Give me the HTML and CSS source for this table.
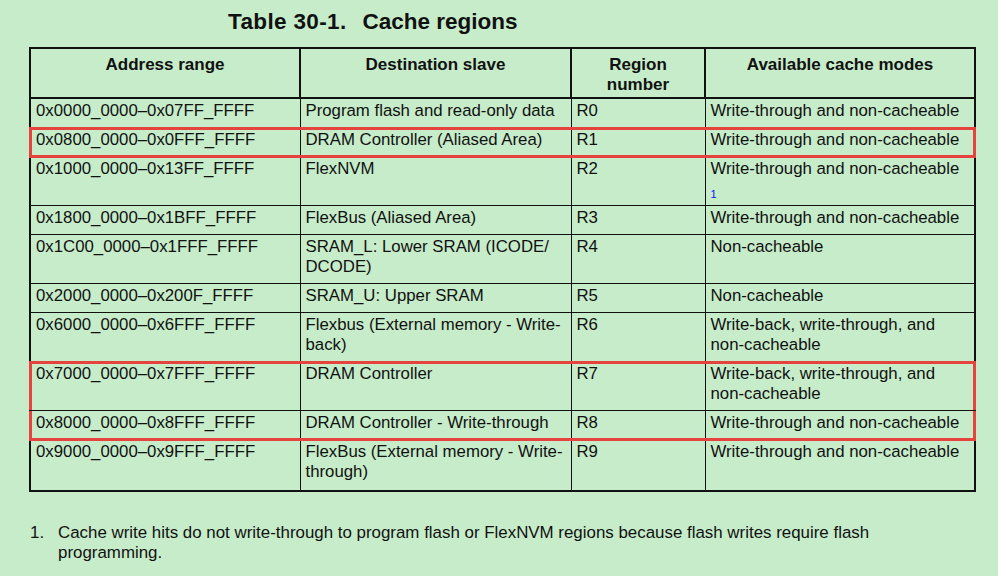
FILE: index.html
```html
<!DOCTYPE html>
<html>
<head>
<meta charset="utf-8">
<link rel="stylesheet" href="styles.css">
</head>
<body>
<div class="page">
  <h1 class="title"><span class="num">Table 30-1.</span><span>Cache regions</span></h1>
  <table class="regions">
    <colgroup>
      <col class="c1"><col class="c2"><col class="c3"><col class="c4">
    </colgroup>
    <thead>
      <tr><th>Address range</th><th>Destination slave</th><th>Region<br>number</th><th>Available cache modes</th></tr>
    </thead>
    <tbody>
      <tr><td>0x0000_0000–0x07FF_FFFF</td><td>Program flash and read-only data</td><td>R0</td><td>Write-through and non-cacheable</td></tr>
      <tr class="hl hl-top hl-bottom"><td>0x0800_0000–0x0FFF_FFFF</td><td>DRAM Controller (Aliased Area)</td><td>R1</td><td>Write-through and non-cacheable</td></tr>
      <tr><td>0x1000_0000–0x13FF_FFFF</td><td>FlexNVM</td><td>R2</td><td>Write-through and non-cacheable<br><a class="fn">1</a></td></tr>
      <tr><td>0x1800_0000–0x1BFF_FFFF</td><td>FlexBus (Aliased Area)</td><td>R3</td><td>Write-through and non-cacheable</td></tr>
      <tr><td>0x1C00_0000–0x1FFF_FFFF</td><td>SRAM_L: Lower SRAM (ICODE/<br>DCODE)</td><td>R4</td><td>Non-cacheable</td></tr>
      <tr><td>0x2000_0000–0x200F_FFFF</td><td>SRAM_U: Upper SRAM</td><td>R5</td><td>Non-cacheable</td></tr>
      <tr><td>0x6000_0000–0x6FFF_FFFF</td><td>Flexbus (External memory - Write-<br>back)</td><td>R6</td><td>Write-back, write-through, and<br>non-cacheable</td></tr>
      <tr class="hl hl-top"><td>0x7000_0000–0x7FFF_FFFF</td><td>DRAM Controller</td><td>R7</td><td>Write-back, write-through, and<br>non-cacheable</td></tr>
      <tr class="hl hl-bottom"><td>0x8000_0000–0x8FFF_FFFF</td><td>DRAM Controller - Write-through</td><td>R8</td><td>Write-through and non-cacheable</td></tr>
      <tr class="last"><td>0x9000_0000–0x9FFF_FFFF</td><td>FlexBus (External memory - Write-<br>through)</td><td>R9</td><td>Write-through and non-cacheable</td></tr>
    </tbody>
  </table>
  <div class="footnote">
    <span class="fn-num">1.</span>
    <span class="fn-text">Cache write hits do not write-through to program flash or FlexNVM regions because flash writes require flash programming.</span>
  </div>
</div>
</body>
</html>
```

FILE: styles.css
```css
html, body {
  margin: 0;
  padding: 0;
  background: #c7ecca;
}
body {
  font-family: "Liberation Sans", Arial, sans-serif;
  color: #111;
}
.page {
  width: 998px;
  height: 576px;
  padding-top: 8px;
  box-sizing: border-box;
}
.title {
  margin: 0 0 0 228px;
  font-size: 22.5px;
  line-height: 28px;
  font-weight: bold;
  height: 39px;
}
.title .num {
  margin-right: 16px;
  letter-spacing: 0.35px;
}
.regions {
  margin-left: 29px;
  width: 945px;
  border-collapse: collapse;
  table-layout: fixed;
  border: 2px solid #111;
  font-size: 16.8px;
  line-height: 20px;
}
.c1 { width: 270px; }
.c2 { width: 271px; }
.c3 { width: 134px; }
.c4 { width: 270px; }
.regions th {
  border: 2px solid #111;
  font-weight: bold;
  font-size: 17px;
  text-align: center;
  vertical-align: top;
  padding: 6px 5px 2px 5px;
  height: 40px;
}
.regions td {
  border: 1px solid #111;
  text-align: left;
  vertical-align: top;
  padding: 2px 5px 6px 5px;
  white-space: nowrap;
}
.regions tr.last td {
  padding-bottom: 8px;
}
.regions tr.hl td {
  position: relative;
}
.regions tr.hl td::after {
  content: "";
  position: absolute;
  left: -1px;
  right: -1px;
  top: 0;
  bottom: 0;
  pointer-events: none;
}
.regions tr.hl-top td::after {
  top: -1px;
  border-top: 3px solid #e6433f;
}
.regions tr.hl-bottom td::after {
  bottom: -2px;
  border-bottom: 3px solid #e6433f;
}
.regions tr.hl td:first-child::after {
  left: -2px;
  border-left: 3px solid #e6433f;
}
.regions tr.hl td:last-child::after {
  right: -2px;
  border-right: 3px solid #e6433f;
}
.fn {
  color: #1010ff;
  font-size: 11px;
  line-height: 14px;
  vertical-align: top;
  position: relative;
  top: 8px;
}
.footnote {
  display: flex;
  margin: 31px 0 0 30px;
  font-size: 16.9px;
  line-height: 20px;
  width: 880px;
}
.fn-num {
  width: 28px;
  flex: none;
}
.fn-text {
  flex: 1;
}
```
